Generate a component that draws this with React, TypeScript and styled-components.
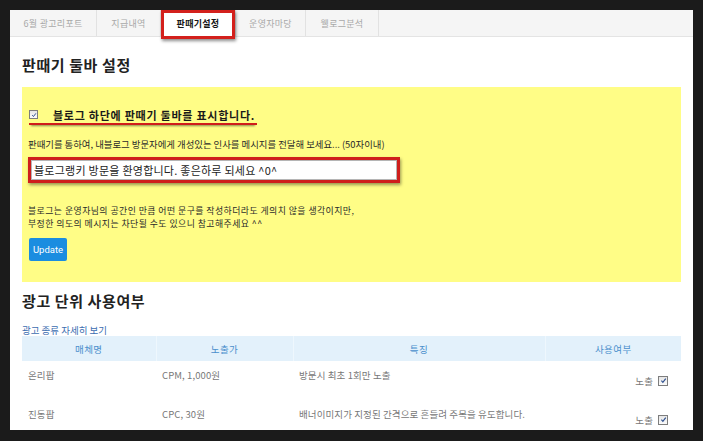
import React from "react";
import styled, { createGlobalStyle } from "styled-components";

const Global = createGlobalStyle`
  html, body { margin: 0; padding: 0; background: #1b1b1b; }
  body { font-family: "Noto Sans CJK KR", "Noto Sans", sans-serif; }
  * { box-sizing: border-box; }
`;

const Frame = styled.div`
  width: 703px;
  height: 441px;
  padding: 10px 10px 11px 10px;
  background: #1b1b1b;
`;

const Panel = styled.div`
  background: #fff;
  height: 420px;
  overflow: hidden;
`;

const TabBar = styled.nav`
  display: flex;
  height: 27px;
  background: #f5f5f5;
  border-bottom: 1px solid #e4e4e4;
`;

const Tab = styled.div<{ $w: number; $active?: boolean }>`
  position: relative;
  width: ${(p) => p.$w}px;
  display: flex;
  align-items: center;
  justify-content: center;
  border-right: 1px solid #e2e2e2;
  font-size: 9px;
  letter-spacing: 0.3px;
  color: ${(p) => (p.$active ? "#151515" : "#a8a8a8")};
  font-weight: ${(p) => (p.$active ? 700 : 400)};
  background: ${(p) => (p.$active ? "#fff" : "transparent")};
  margin-bottom: ${(p) => (p.$active ? "-1px" : "0")};
`;

const Highlight = styled.span`
  position: absolute;
  left: 0;
  right: 0;
  top: 0;
  bottom: -2px;
  border: 3px solid #d3201c;
  box-shadow: 1px 2px 3px rgba(0, 0, 0, 0.45);
  pointer-events: none;
`;

const Content = styled.main`
  padding: 0 12px;
`;

const Title = styled.h2<{ $top: number }>`
  margin: ${(p) => p.$top}px 0 0;
  font-size: 15px;
  line-height: 20px;
  font-weight: 700;
  letter-spacing: 0.6px;
  color: #222;
`;

const YellowBox = styled.section`
  margin-top: 12px;
  background: #fffd86;
  padding: 20px 6px 21px;
`;

const CheckRow = styled.label`
  display: flex;
  align-items: center;
  gap: 15px;
  width: 228px;
  height: 15px;
  margin-left: 1px;
  box-sizing: content-box;
  padding-bottom: 1px;
  border-bottom: 2px solid #cf1d1a;
  box-shadow: 0 3px 2px -2px rgba(0, 0, 0, 0.45);
  font-size: 11px;
  font-weight: 700;
  letter-spacing: 0.75px;
  color: #1a1a1a;
  line-height: 14px;
`;

const Box = styled.span<{ $size: number }>`
  display: inline-flex;
  align-items: center;
  justify-content: center;
  width: ${(p) => p.$size}px;
  height: ${(p) => p.$size}px;
  border: 1px solid #7d7d7d;
  background: linear-gradient(#e6e6e6, #fbfbfb);
  flex: none;
`;

const Desc = styled.p<{ $top: number }>`
  margin: ${(p) => p.$top}px 0 0;
  font-size: 9.4px;
  line-height: 12px;
  color: #2a2a2a;
  white-space: nowrap;
`;

const NoteLine = styled.p<{ $top: number }>`
  margin: ${(p) => p.$top}px 0 0;
  font-size: 8.9px;
  letter-spacing: 0.45px;
  line-height: 13px;
  height: 13px;
  color: #2a2a2a;
  white-space: nowrap;
`;

const MessageInput = styled.input`
  display: block;
  margin-top: 7px;
  width: 372px;
  height: 26px;
  border: 3px solid #cf1f1c;
  box-shadow: 1px 2px 3px rgba(0, 0, 0, 0.4), inset 0 0 0 1px #b5b5b5;
  padding: 0 3px;
  font-family: inherit;
  font-size: 11px;
  letter-spacing: 0.25px;
  color: #222;
  background: #fff;
  outline: none;
`;

const UpdateButton = styled.button`
  display: block;
  margin-top: 8px;
  width: 38px;
  height: 23px;
  padding: 0;
  border: none;
  border-radius: 2px;
  background: #1b8de0;
  color: #fff;
  font-family: Roboto, "Liberation Sans", sans-serif;
  font-size: 9.5px;
  margin-left: 1px;
`;

const InfoLink = styled.a`
  display: block;
  margin-top: 13px;
  font-size: 9.5px;
  line-height: 12px;
  color: #3c6db0;
  text-decoration: none;
`;

const Table = styled.table`
  width: 100%;
  border-collapse: collapse;
  table-layout: fixed;
`;

const Th = styled.th`
  height: 25px;
  padding: 0;
  background: #e3f1fb;
  color: #4a8fcc;
  font-weight: 400;
  font-size: 9.5px;
  letter-spacing: 0.4px;
  border-right: 1px solid #eef7fd;
  &:last-child { border-right: none; }
`;

const Td = styled.td<{ $use?: boolean }>`
  height: 39px;
  vertical-align: ${(p) => (p.$use ? "middle" : "top")};
  text-align: ${(p) => (p.$use ? "right" : "left")};
  padding: ${(p) => (p.$use ? "0 13px 0 0" : "8px 6px 0")};
  font-size: 9.5px;
  line-height: 12px;
  color: #777;
  letter-spacing: 0.1px;
  white-space: nowrap;
`;

const UseLabel = styled.span`
  display: inline-flex;
  align-items: center;
  gap: 5px;
`;

const Check = ({ size }: { size: number }) => (
  <Box $size={size}>
    <svg width={size - 3} height={size - 3} viewBox="0 0 10 10">
      <path d="M2 5.2 L4.1 7.6 L8.2 2.2" fill="none" stroke="#2d4f8f" strokeWidth="1.6" />
    </svg>
  </Box>
);

const tabs = [
  { label: "6월 광고리포트", w: 87 },
  { label: "지급내역", w: 64 },
  { label: "판때기설정", w: 75, active: true },
  { label: "운영자마당", w: 70 },
  { label: "웰로그분석", w: 73 },
];

const rows = [
  { name: "온리팝", price: "CPM, 1,000원", feature: "방문시 최초 1회만 노출" },
  { name: "진동팝", price: "CPC, 30원", feature: "배너이미지가 지정된 간격으로 흔들려 주목을 유도합니다." },
];

export default function App() {
  return (
    <>
      <Global />
      <Frame>
        <Panel>
          <TabBar>
            {tabs.map((t) => (
              <Tab key={t.label} $w={t.w} $active={t.active}>
                {t.label}
                {t.active && <Highlight />}
              </Tab>
            ))}
          </TabBar>
          <Content>
            <Title $top={18}>판때기 둘바 설정</Title>
            <YellowBox>
              <CheckRow>
                <Check size={9} />
                블로그 하단에 판때기 둘바를 표시합니다.
              </CheckRow>
              <Desc $top={13}>
                판때기를 통하여, 내블로그 방문자에게 개성있는 인사를 메시지를 전달해 보세요... (50자이내)
              </Desc>
              <MessageInput defaultValue="블로그랭키 방문을 환영합니다. 좋은하루 되세요 ^0^" />
              <NoteLine $top={21}>
                블로그는 운영자님의 공간인 만큼 어떤 문구를 작성하더라도 게의치 않을 생각이지만,
              </NoteLine>
              <NoteLine $top={0}>부정한 의도의 메시지는 차단될 수도 있으니 참고해주세요 ^^</NoteLine>
              <UpdateButton>Update</UpdateButton>
            </YellowBox>
            <Title $top={9}>광고 단위 사용여부</Title>
            <InfoLink href="#">광고 종류 자세히 보기</InfoLink>
            <Table>
              <colgroup>
                <col style={{ width: 134 }} />
                <col style={{ width: 137 }} />
                <col style={{ width: 252 }} />
                <col style={{ width: 136 }} />
              </colgroup>
              <thead>
                <tr>
                  <Th>매체명</Th>
                  <Th>노출가</Th>
                  <Th>특징</Th>
                  <Th>사용여부</Th>
                </tr>
              </thead>
              <tbody>
                {rows.map((r) => (
                  <tr key={r.name}>
                    <Td>{r.name}</Td>
                    <Td>{r.price}</Td>
                    <Td>{r.feature}</Td>
                    <Td $use>
                      <UseLabel>
                        노출
                        <Check size={10} />
                      </UseLabel>
                    </Td>
                  </tr>
                ))}
              </tbody>
            </Table>
          </Content>
        </Panel>
      </Frame>
    </>
  );
}
